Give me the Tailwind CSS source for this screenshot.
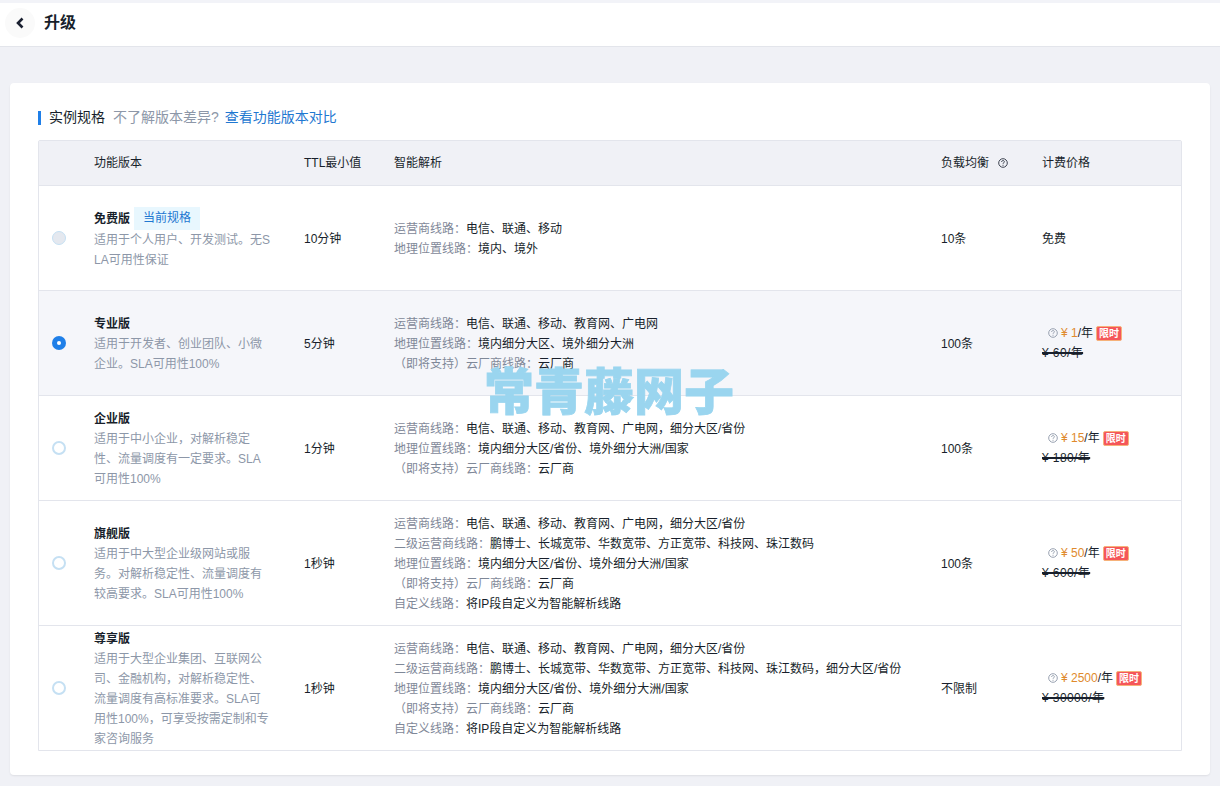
<!DOCTYPE html>
<html lang="zh">
<head>
<meta charset="utf-8">
<script src="https://cdn.jsdelivr.net/npm/@tailwindcss/browser@4"></script>
</head>
<body class="m-0 h-[786px] w-[1220px] overflow-hidden bg-[#f0f1f6] font-['Liberation_Sans','Noto_Sans_CJK_SC',sans-serif] text-[12px] leading-[20px] text-[#181f2b] relative">
<header class="h-[47px] mt-0 bg-white border-b border-[#e3e5eb] border-t-[3px] border-t-[#f2f3f8] flex items-center pl-[5px] pb-[4px]">
  <span class="w-[30px] h-[30px] rounded-full bg-[#fafafa] flex items-center justify-center">
    <svg width="10" height="14" viewBox="0 0 10 14" fill="none" stroke="#1a2030" stroke-width="2.6"><path d="M7.5 2.5 3 7l4.5 4.5"/></svg>
  </span>
  <h1 class="ml-[9px] text-[16px] font-bold leading-[24px]">升级</h1>
</header>

<main class="mt-[36px] mx-[10px] h-[692px] bg-white rounded-[4px] shadow-[0_1px_2px_rgba(0,0,0,0.08)] pt-[24px] px-[28px]">
  <div class="h-[20px] flex items-center text-[14px]">
    <span class="w-[3px] h-[14px] bg-[#1f7fe8] mr-[8px] mt-[1px]"></span>
    <span>实例规格</span>
    <span class="ml-[8px] text-[#8d97a8]">不了解版本差异?</span>
    <span class="ml-[6px] text-[#1f78d1]">查看功能版本对比</span>
  </div>

  <div class="mt-[13px] w-[1144px] border border-[#e3e5ec] rounded-t-[2px]">
    <div class="grid grid-cols-[55px_210px_90px_547px_101px_1fr] h-[45px] items-center bg-[#f0f1f6] border-b border-[#e3e5ec]">
      <span></span>
      <span>功能版本</span>
      <span>TTL最小值</span>
      <span>智能解析</span>
      <span class="flex items-center">负载均衡<svg class="ml-[9px]" width="10" height="10" viewBox="0 0 10 10" fill="none" stroke="#2a3140"><circle cx="5" cy="5" r="4.3" stroke-width="0.9"/><path d="M3.6 4c0-1.9 2.8-1.9 2.8-.2 0 1-1.4 1-1.4 2M5 6.8v1" stroke-width="0.9"/></svg></span>
      <span>计费价格</span>
    </div>

    <!-- 免费版 -->
    <div class="grid grid-cols-[55px_210px_90px_547px_101px_1fr] h-[105px] pt-[2px] items-center border-b border-[#e3e5ec]">
      <span class="-mt-[2px] ml-[13px] w-[14px] h-[14px] rounded-full bg-[#e4e8ef] border-[1.5px] border-[#c5e0f3]"></span>
      <div class="w-[178px] -mt-[1px]">
        <div class="flex items-center"><b class="font-bold">免费版</b><span class="ml-[4px] px-[9px] h-[23px] leading-[23px] bg-[#e8f7fe] text-[#1f78d1]">当前规格</span></div>
        <p class="text-[#8d97a8] break-all">适用于个人用户、开发测试。无SLA可用性保证</p>
      </div>
      <span>10分钟</span>
      <div>
        <div><span class="text-[#7f8898]">运营商线路：</span>电信、联通、移动</div>
        <div><span class="text-[#7f8898]">地理位置线路：</span>境内、境外</div>
      </div>
      <span>10条</span>
      <span>免费</span>
    </div>

    <!-- 专业版 -->
    <div class="grid grid-cols-[55px_210px_90px_547px_101px_1fr] h-[105px] pt-[2px] items-center bg-[#f5f6fa] border-b border-[#e3e5ec]">
      <span class="-mt-[2px] ml-[13px] w-[14px] h-[14px] rounded-full bg-[#1f7fe8] flex items-center justify-center"><span class="w-[4px] h-[4px] rounded-full bg-white"></span></span>
      <div class="w-[178px]">
        <b class="block font-bold">专业版</b>
        <p class="text-[#8d97a8] break-all">适用于开发者、创业团队、小微企业。SLA可用性100%</p>
      </div>
      <span>5分钟</span>
      <div>
        <div><span class="text-[#7f8898]">运营商线路：</span>电信、联通、移动、教育网、广电网</div>
        <div><span class="text-[#7f8898]">地理位置线路：</span>境内细分大区、境外细分大洲</div>
        <div><span class="text-[#7f8898]">（即将支持）云厂商线路：</span>云厂商</div>
      </div>
      <span>100条</span>
      <div class="-mt-[2px]">
        <div class="flex items-center pl-[6px]">
          <svg class="mr-[3px]" width="10" height="10" viewBox="0 0 10 10" fill="none" stroke="#8d97a8" stroke-width="0.9"><circle cx="5" cy="5" r="4.3"/><path d="M3.6 4c0-1.9 2.8-1.9 2.8-.2 0 1-1.4 1-1.4 2M5 6.8v1"/></svg>
          <span class="text-[#e08a2c]">¥ 1</span>/年<span class="ml-[3px] px-[2px] h-[15px] leading-[14px] text-[10px] font-bold text-white bg-[#f5565a] rounded-[2px] border border-[#f6b27a]">限时</span>
        </div>
        <div class="tracking-[0.4px] line-through decoration-[#181f2b] decoration-[1.5px]">¥ 60/年</div>
      </div>
    </div>

    <!-- 企业版 -->
    <div class="grid grid-cols-[55px_210px_90px_547px_101px_1fr] h-[105px] pt-[2px] items-center border-b border-[#e3e5ec]">
      <span class="-mt-[2px] ml-[13px] w-[14px] h-[14px] rounded-full bg-white border-2 border-[#c5e0f3]"></span>
      <div class="w-[178px]">
        <b class="block font-bold">企业版</b>
        <p class="text-[#8d97a8] break-all">适用于中小企业，对解析稳定性、流量调度有一定要求。SLA可用性100%</p>
      </div>
      <span>1分钟</span>
      <div>
        <div><span class="text-[#7f8898]">运营商线路：</span>电信、联通、移动、教育网、广电网，细分大区/省份</div>
        <div><span class="text-[#7f8898]">地理位置线路：</span>境内细分大区/省份、境外细分大洲/国家</div>
        <div><span class="text-[#7f8898]">（即将支持）云厂商线路：</span>云厂商</div>
      </div>
      <span>100条</span>
      <div class="-mt-[2px]">
        <div class="flex items-center pl-[6px]">
          <svg class="mr-[3px]" width="10" height="10" viewBox="0 0 10 10" fill="none" stroke="#8d97a8" stroke-width="0.9"><circle cx="5" cy="5" r="4.3"/><path d="M3.6 4c0-1.9 2.8-1.9 2.8-.2 0 1-1.4 1-1.4 2M5 6.8v1"/></svg>
          <span class="text-[#e08a2c]">¥ 15</span>/年<span class="ml-[3px] px-[2px] h-[15px] leading-[14px] text-[10px] font-bold text-white bg-[#f5565a] rounded-[2px] border border-[#f6b27a]">限时</span>
        </div>
        <div class="tracking-[0.4px] line-through decoration-[#181f2b] decoration-[1.5px]">¥ 180/年</div>
      </div>
    </div>

    <!-- 旗舰版 -->
    <div class="grid grid-cols-[55px_210px_90px_547px_101px_1fr] h-[125px] pt-[2px] items-center border-b border-[#e3e5ec]">
      <span class="-mt-[2px] ml-[13px] w-[14px] h-[14px] rounded-full bg-white border-2 border-[#c5e0f3]"></span>
      <div class="w-[178px]">
        <b class="block font-bold">旗舰版</b>
        <p class="text-[#8d97a8] break-all">适用于中大型企业级网站或服务。对解析稳定性、流量调度有较高要求。SLA可用性100%</p>
      </div>
      <span>1秒钟</span>
      <div>
        <div><span class="text-[#7f8898]">运营商线路：</span>电信、联通、移动、教育网、广电网，细分大区/省份</div>
        <div><span class="text-[#7f8898]">二级运营商线路：</span>鹏博士、长城宽带、华数宽带、方正宽带、科技网、珠江数码</div>
        <div><span class="text-[#7f8898]">地理位置线路：</span>境内细分大区/省份、境外细分大洲/国家</div>
        <div><span class="text-[#7f8898]">（即将支持）云厂商线路：</span>云厂商</div>
        <div><span class="text-[#7f8898]">自定义线路：</span>将IP段自定义为智能解析线路</div>
      </div>
      <span>100条</span>
      <div class="-mt-[2px]">
        <div class="flex items-center pl-[6px]">
          <svg class="mr-[3px]" width="10" height="10" viewBox="0 0 10 10" fill="none" stroke="#8d97a8" stroke-width="0.9"><circle cx="5" cy="5" r="4.3"/><path d="M3.6 4c0-1.9 2.8-1.9 2.8-.2 0 1-1.4 1-1.4 2M5 6.8v1"/></svg>
          <span class="text-[#e08a2c]">¥ 50</span>/年<span class="ml-[3px] px-[2px] h-[15px] leading-[14px] text-[10px] font-bold text-white bg-[#f5565a] rounded-[2px] border border-[#f6b27a]">限时</span>
        </div>
        <div class="tracking-[0.4px] line-through decoration-[#181f2b] decoration-[1.5px]">¥ 600/年</div>
      </div>
    </div>

    <!-- 尊享版 -->
    <div class="grid grid-cols-[55px_210px_90px_547px_101px_1fr] h-[124px] pt-[2px] items-center">
      <span class="-mt-[2px] ml-[13px] w-[14px] h-[14px] rounded-full bg-white border-2 border-[#c5e0f3]"></span>
      <div class="w-[178px]">
        <b class="block font-bold">尊享版</b>
        <p class="text-[#8d97a8] break-all">适用于大型企业集团、互联网公司、金融机构，对解析稳定性、流量调度有高标准要求。SLA可用性100%，可享受按需定制和专家咨询服务</p>
      </div>
      <span>1秒钟</span>
      <div>
        <div><span class="text-[#7f8898]">运营商线路：</span>电信、联通、移动、教育网、广电网，细分大区/省份</div>
        <div><span class="text-[#7f8898]">二级运营商线路：</span>鹏博士、长城宽带、华数宽带、方正宽带、科技网、珠江数码，细分大区/省份</div>
        <div><span class="text-[#7f8898]">地理位置线路：</span>境内细分大区/省份、境外细分大洲/国家</div>
        <div><span class="text-[#7f8898]">（即将支持）云厂商线路：</span>云厂商</div>
        <div><span class="text-[#7f8898]">自定义线路：</span>将IP段自定义为智能解析线路</div>
      </div>
      <span>不限制</span>
      <div class="-mt-[2px]">
        <div class="flex items-center pl-[6px]">
          <svg class="mr-[3px]" width="10" height="10" viewBox="0 0 10 10" fill="none" stroke="#8d97a8" stroke-width="0.9"><circle cx="5" cy="5" r="4.3"/><path d="M3.6 4c0-1.9 2.8-1.9 2.8-.2 0 1-1.4 1-1.4 2M5 6.8v1"/></svg>
          <span class="text-[#e08a2c]">¥ 2500</span>/年<span class="ml-[3px] px-[2px] h-[15px] leading-[14px] text-[10px] font-bold text-white bg-[#f5565a] rounded-[2px] border border-[#f6b27a]">限时</span>
        </div>
        <div class="tracking-[0.4px] line-through decoration-[#181f2b] decoration-[1.5px]">¥ 30000/年</div>
      </div>
    </div>
  </div>
</main>

<div class="absolute left-[484px] top-[365px] text-[50px] leading-[56px] font-black text-[#9ad5ef] whitespace-nowrap [-webkit-text-stroke:0.8px_#9ad5ef]">常青藤网子</div>
</body>
</html>
